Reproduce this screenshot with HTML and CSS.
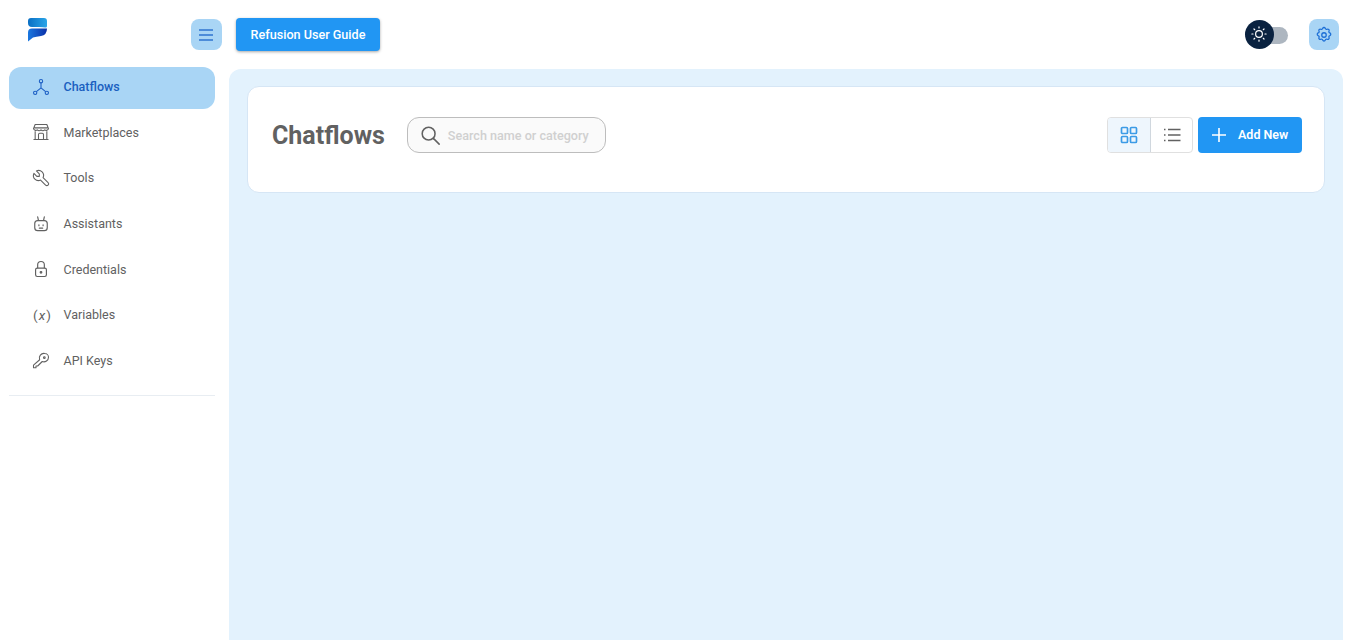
FILE: index.html
```html
<!DOCTYPE html>
<html lang="en">
<head>
<meta charset="utf-8">
<title>Chatflows</title>
<link rel="stylesheet" href="styles.css">
</head>
<body>
<header class="topbar">
  <div class="brand">
    <svg class="logo" width="21" height="24" viewBox="0 0 21 24">
      <defs>
        <linearGradient id="lg1" x1="0" y1="0" x2="1" y2="0"><stop offset="0" stop-color="#0a6fc4"/><stop offset="1" stop-color="#2aa5e8"/></linearGradient>
        <linearGradient id="lg2" x1="0" y1="0" x2="1" y2="0"><stop offset="0" stop-color="#1a78e0"/><stop offset="1" stop-color="#0a2fa8"/></linearGradient>
      </defs>
      <path d="M4 0H17Q20 0 20 3V8Q20 10 18 9.500Q16 9 12 9H5Q1 9 1 5V3Q1 0 4 0Z" fill="url(#lg1)"/>
      <path d="M5 10.500H20Q20 17 14 18Q9 18.500 6 19.500L1 23.500V14.500Q1 10.500 5 10.500Z" fill="url(#lg2)"/>
    </svg>
    <button class="icon-btn" aria-label="Menu">
      <svg class="menu-glyph" width="16" height="14" viewBox="0 0 16 14" fill="none" stroke="#2f74d0" stroke-width="1.300"><path d="M1 2H15M1 7H15M1 12H15"/></svg>
    </button>
  </div>
  <button class="guide-btn">Refusion User Guide</button>
  <div class="spacer"></div>
  <div class="theme-switch">
    <span class="switch-track"></span>
    <span class="switch-thumb">
      <svg class="sun-glyph" width="18" height="18" viewBox="0 0 24 24" fill="none" stroke="#fff" stroke-width="1.600" stroke-linecap="round"><circle cx="12" cy="12" r="4.500"/><path d="M12 2.500v1.500M12 20v1.500M2.500 12H4M20 12h1.500M5.300 5.300l1 1M17.700 17.700l1 1M5.300 18.700l1-1M17.700 6.300l1-1"/></svg>
    </span>
  </div>
  <button class="icon-btn settings" aria-label="Settings">
    <svg width="18" height="18" viewBox="0 0 24 24" fill="none" stroke="#1d6fd6" stroke-width="1.700" stroke-linejoin="round"><path d="M10.300 3.200a1.800 1.800 0 0 1 3.400 0 1.800 1.800 0 0 0 2.600 1.100 1.800 1.800 0 0 1 2.400 2.400 1.800 1.800 0 0 0 1.100 2.600 1.800 1.800 0 0 1 0 3.400 1.800 1.800 0 0 0-1.100 2.600 1.800 1.800 0 0 1-2.400 2.400 1.800 1.800 0 0 0-2.600 1.100 1.800 1.800 0 0 1-3.400 0 1.800 1.800 0 0 0-2.600-1.100 1.800 1.800 0 0 1-2.400-2.400 1.800 1.800 0 0 0-1.100-2.600 1.800 1.800 0 0 1 0-3.400 1.800 1.800 0 0 0 1.100-2.600 1.800 1.800 0 0 1 2.400-2.400 1.800 1.800 0 0 0 2.600-1.100Z"/><circle cx="12" cy="12" r="3"/></svg>
  </button>
</header>
<div class="layout">
  <nav class="sidebar">
    <a class="nav-item active">
      <svg class="nav-icon" viewBox="0 0 24 24" fill="none" stroke="#1d5fc4" stroke-width="1.300"><circle cx="12" cy="5" r="2"/><circle cx="5" cy="19" r="2"/><circle cx="19" cy="19" r="2"/><path d="M12 7v6M12 13l-5.500 4.500M12 13l5.500 4.500"/></svg>
      <span class="nav-label">Chatflows</span>
    </a>
    <a class="nav-item">
      <svg class="nav-icon" viewBox="0 0 24 24" fill="none" stroke="#616161" stroke-width="1.300" stroke-linejoin="round"><path d="M3 21h18M4 7h16M5 3h14l2 5a3 3 0 0 1-4.500 1.500 3 3 0 0 1-4.500 0 3 3 0 0 1-4.500 0A3 3 0 0 1 3 8ZM5 11v10M19 11v10M9 21v-6a1.500 1.500 0 0 1 1.500-1.500h3A1.500 1.500 0 0 1 15 15v6"/></svg>
      <span class="nav-label">Marketplaces</span>
    </a>
    <a class="nav-item">
      <svg class="nav-icon" viewBox="0 0 24 24" fill="none" stroke="#616161" stroke-width="1.300" stroke-linejoin="round"><path d="M7 10h3V7L6.500 3.500a6 6 0 0 1 8 8l6 6a2 2 0 0 1-3 3l-6-6a6 6 0 0 1-8-8L7 10" transform="translate(24 0) scale(-1 1) rotate(90 12 12)"/></svg>
      <span class="nav-label">Tools</span>
    </a>
    <a class="nav-item">
      <svg class="nav-icon" viewBox="0 0 24 24" fill="none" stroke="#616161" stroke-width="1.400" stroke-linecap="round" stroke-linejoin="round"><path d="M8 8h8a3.500 3.500 0 0 1 3.500 3.500v5A3.500 3.500 0 0 1 16 20H8a3.500 3.500 0 0 1-3.500-3.500v-5A3.500 3.500 0 0 1 8 8ZM8 3.500l1 4.500M16 3.500l-1 4.500M9.500 13v1M14.500 13v1M10 17h4"/></svg>
      <span class="nav-label">Assistants</span>
    </a>
    <a class="nav-item">
      <svg class="nav-icon" viewBox="0 0 24 24" fill="none" stroke="#616161" stroke-width="1.400" stroke-linejoin="round"><rect x="5.500" y="11" width="13" height="10" rx="2"/><path d="M8 11V7a4 4 0 0 1 8 0v4"/><circle cx="12" cy="16" r="1" fill="#616161"/></svg>
      <span class="nav-label">Credentials</span>
    </a>
    <a class="nav-item">
      <span class="var-icon">(<i>x</i>)</span>
      <span class="nav-label">Variables</span>
    </a>
    <a class="nav-item">
      <svg class="nav-icon" viewBox="0 0 24 24" fill="none" stroke="#616161" stroke-width="1.300" stroke-linejoin="round"><path d="M16.500 3a4.500 4.500 0 0 1 4.500 4.500 5.500 5.500 0 0 1-7.500 5.100L8 18H6v2H3v-3l7.400-6.500A5.500 5.500 0 0 1 16.500 3Z"/><circle cx="16" cy="8" r="1"/></svg>
      <span class="nav-label">API Keys</span>
    </a>
    <div class="divider"></div>
  </nav>
  <main class="content">
    <section class="card">
      <h1 class="title">Chatflows</h1>
      <label class="search">
        <svg width="22" height="22" viewBox="0 0 24 24" fill="none" stroke="#616161" stroke-width="1.700" stroke-linecap="round"><circle cx="10.500" cy="10.500" r="7"/><path d="M16 16l6 6"/></svg>
        <span class="placeholder">Search name or category</span>
      </label>
      <div class="spacer"></div>
      <div class="view-toggle">
        <span class="view-opt selected">
          <svg width="18" height="18" viewBox="0 0 18 18" fill="none" stroke="#3c9be6" stroke-width="1.700"><rect x="1.500" y="1.500" width="6" height="6" rx="1"/><rect x="10.500" y="1.500" width="6" height="6" rx="1"/><rect x="1.500" y="10.500" width="6" height="6" rx="1"/><rect x="10.500" y="10.500" width="6" height="6" rx="1"/></svg>
        </span>
        <span class="view-opt">
          <svg width="18" height="18" viewBox="0 0 18 18" fill="none" stroke="#616161" stroke-width="1.600"><path d="M5 3.500H17.500M5 9H17.500M5 14.500H17.500M1 3.500H2.500M1 9H2.500M1 14.500H2.500"/></svg>
        </span>
      </div>
      <button class="add-btn">
        <svg width="16" height="16" viewBox="0 0 16 16" fill="none" stroke="#fff" stroke-width="1.600"><path d="M8 1V15M1 8H15"/></svg>
        <span>Add New</span>
      </button>
    </section>
  </main>
</div>
</body>
</html>
```
FILE: styles.css
```css
* { box-sizing: border-box; }
html, body { height: 100%; }
body {
  margin: 0;
  height: 640px;
  overflow: hidden;
  background: #fff;
  font-family: Roboto, "Liberation Sans", sans-serif;
  color: #616161;
}
button { font-family: inherit; border: 0; padding: 0; cursor: pointer; }
.spacer { flex: 1; }

.topbar {
  display: flex;
  align-items: center;
  height: 69px;
  padding: 0 20px 0 27px;
}
.brand {
  display: flex;
  align-items: center;
  justify-content: space-between;
  width: 195px;
  margin-right: 14px;
}
.logo { margin-top: -10px; }
.icon-btn {
  display: flex;
  align-items: center;
  justify-content: center;
  width: 31px;
  height: 31px;
  border-radius: 8px;
  background: #a9d5f5;
}
.menu-glyph { margin-right: 1px; }
.icon-btn.settings { width: 30px; }
.guide-btn {
  height: 33px;
  width: 144px;
  border-radius: 4px;
  background: #2196f3;
  color: #fff;
  font-size: 12.600px;
  font-weight: 500;
  box-shadow: 0 1px 3px rgba(0, 0, 0, .35);
}
.theme-switch {
  position: relative;
  width: 44px;
  height: 30px;
  margin-right: 20px;
}
.switch-track {
  position: absolute;
  left: 9px;
  top: 7px;
  width: 34px;
  height: 17px;
  border-radius: 9px;
  background: #adb6c0;
}
.switch-thumb {
  position: absolute;
  left: 0;
  top: 0;
  width: 29px;
  height: 29px;
  display: flex;
  align-items: center;
  justify-content: center;
  border-radius: 50%;
  background: #0a2240;
}
.sun-glyph { margin-right: 1px; }

.layout { display: flex; height: 571px; }
.sidebar { width: 229px; padding: 0 14px 0 9px; margin-top: -2px; }
.nav-item {
  display: flex;
  align-items: center;
  height: 42px;
  margin-bottom: 3.700px;
  padding-left: 21px;
  padding-bottom: 3px;
  border-radius: 12px;
  font-size: 12.500px;
  color: #616161;
}
.nav-item.active {
  background: #a9d5f5;
  color: #1a5fc0;
  font-weight: 500;
}
.nav-icon { width: 20px; height: 20px; margin-left: 1px; margin-right: 12.500px; flex: none; }
.var-icon {
  width: 20px;
  margin-right: 13.500px;
  padding-left: 3px;
  font-size: 13.500px;
  font-weight: 400;
  letter-spacing: 1px;
  white-space: nowrap;
  color: #616161;
}
.divider { height: 1px; background: #e8edf2; margin-top: 12px; }

.content {
  width: 1114px;
  height: 571px;
  padding: 17px 18px;
  background: #e3f2fd;
  border-radius: 12px 12px 0 0;
}
.card {
  display: flex;
  align-items: center;
  height: 107px;
  padding: 0 22px 10px 24px;
  background: #fff;
  border: 1px solid #d6e6f5;
  border-radius: 12px;
}
.title {
  margin: 0 22px 0 0;
  padding-top: 2px;
  font-size: 25px;
  font-weight: 700;
  line-height: 32px;
  color: #616161;
}
.search {
  display: flex;
  align-items: center;
  gap: 7px;
  width: 199px;
  height: 36px;
  padding-left: 11px;
  background: #fafafa;
  border: 1px solid #bdbdbd;
  border-radius: 12px;
}
.placeholder { padding-top: 2px; font-size: 12.600px; font-weight: 500; color: #d0d0d0; white-space: nowrap; }
.view-toggle {
  display: flex;
  height: 36px;
  margin-right: 5px;
  border: 1px solid #e0e0e0;
  border-radius: 4px;
  overflow: hidden;
}
.view-opt {
  display: flex;
  align-items: center;
  justify-content: center;
  width: 41px;
}
.view-opt.selected { width: 43px; background: #eef6fd; border-right: 1px solid #d0d7de; }
.add-btn {
  display: flex;
  align-items: center;
  gap: 11px;
  width: 104px;
  height: 36px;
  padding-left: 13px;
  border-radius: 4px;
  background: #2196f3;
  color: #fff;
  font-size: 12.500px;
  font-weight: 600;
}
```
